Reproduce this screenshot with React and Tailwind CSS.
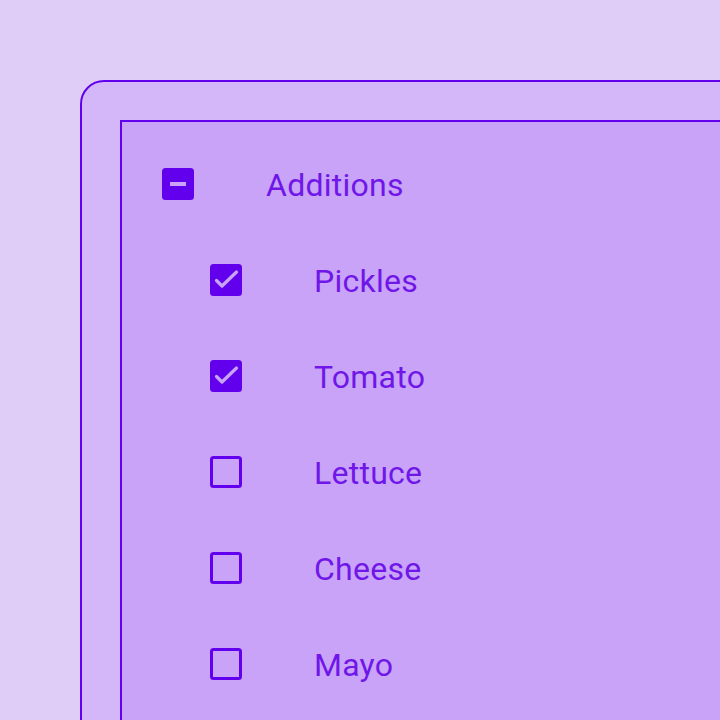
import React from 'react';

const items = [
  { label: 'Pickles', checked: true },
  { label: 'Tomato', checked: true },
  { label: 'Lettuce', checked: false },
  { label: 'Cheese', checked: false },
  { label: 'Mayo', checked: false },
];

function Box({ state }) {
  if (state === 'mixed') {
    return (
      <span className="flex items-center justify-center w-8 h-8 rounded-[3.5px] bg-[#6200ee] shrink-0">
        <span className="block w-4 h-1 bg-[#c8a3f8]" />
      </span>
    );
  }
  if (state === 'checked') {
    return (
      <span className="flex items-center justify-center w-8 h-8 rounded-[3.5px] bg-[#6200ee] shrink-0">
        <svg width="32" height="32" viewBox="0 0 32 32" fill="none">
          <path d="M6.5 16.5l5.5 5.5L26.5 8" stroke="#c8a3f8" strokeWidth="3.2" strokeLinecap="round" strokeLinejoin="round" />
        </svg>
      </span>
    );
  }
  return <span className="block w-8 h-8 rounded-[3.5px] border-[3.5px] border-[#6200ee] shrink-0" />;
}

function Row({ state, label, indent }) {
  return (
    <div className={`flex items-center h-24 gap-[72px] ${indent ? 'pl-12' : ''}`}>
      <Box state={state} />
      <span className="text-[32px] leading-none tracking-[0.25px] text-[#7016e8] pt-[2px]">{label}</span>
    </div>
  );
}

export default function App() {
  return (
    <div className="w-[720px] h-[720px] overflow-hidden bg-[#dfcdf8] pl-20 pt-20" style={{ fontFamily: 'Roboto, "Noto Sans", sans-serif' }}>
      <div className="w-[700px] h-[700px] border-2 border-[#6200ee] rounded-tl-3xl bg-[#d4b7f8] pl-[38px] pt-[38px]">
        <div className="h-[700px] border-2 border-[#6200ee] bg-[#c8a3f8] pl-10 pt-[14px]">
          <Row state="mixed" label="Additions" />
          {items.map((it) => (
            <Row key={it.label} indent state={it.checked ? 'checked' : 'unchecked'} label={it.label} />
          ))}
        </div>
      </div>
    </div>
  );
}
